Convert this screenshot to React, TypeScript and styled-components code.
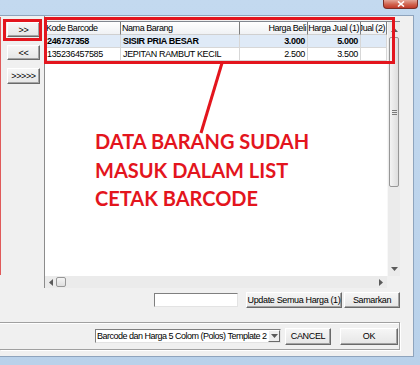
import React from "react";
import styled, { createGlobalStyle } from "styled-components";

const uiFont = `"Liberation Sans", Arial, sans-serif`;

const GlobalStyle = createGlobalStyle`
  html, body {
    margin: 0;
    padding: 0;
  }
  body {
    width: 420px;
    height: 365px;
    overflow: hidden;
    background: #bcd4ec;
    font-family: ${uiFont};
    font-size: 9px;
    letter-spacing: -0.35px;
    color: #000;
  }
`;

const Window = styled.div`
  position: relative;
  width: 420px;
  height: 365px;
  display: flex;
  flex-direction: column;
  background: linear-gradient(#c3d9ef, #b9d1ea);
`;

const TitleBar = styled.div`
  height: 15px;
  flex-shrink: 0;
  display: flex;
  justify-content: flex-end;
  align-items: flex-start;
  padding-right: 2px;
`;

const CloseButton = styled.div`
  width: 35px;
  height: 9px;
  box-sizing: border-box;
  border: 1px solid #7a2e26;
  border-top: none;
  border-radius: 0 0 4px 4px;
  background: linear-gradient(#e4a597, #d0624d 55%, #c13a2a);
  display: flex;
  align-items: center;
  justify-content: center;
`;

const Frame = styled.div`
  flex: 1;
  min-height: 0;
  display: flex;
  padding-right: 6px;
`;

const Body = styled.div`
  flex: 1;
  background: #f0f0f0;
  border-top: 1px solid #8ea4bd;
  border-right: 1px solid #8ea4bd;
  border-bottom: 1px solid #8ea4bd;
  display: flex;
  flex-direction: column;
`;

const BottomFrame = styled.div`
  height: 8px;
  flex-shrink: 0;
`;

const Upper = styled.div`
  height: 272px;
  display: flex;
`;

const LeftPanel = styled.div`
  width: 45px;
  border-right: 1px solid #8c8c8c;
  display: flex;
  flex-direction: column;
  gap: 8px;
  padding: 6px 0 0 7px;
  box-sizing: border-box;
`;

const WinButton = styled.button<{ $w: number; $h?: number }>`
  width: ${(p) => p.$w}px;
  height: ${(p) => p.$h ?? 16}px;
  padding: 0;
  margin: 0;
  box-sizing: border-box;
  font-family: ${uiFont};
  font-size: 9px;
  letter-spacing: -0.35px;
  white-space: nowrap;
  color: #000;
  background: linear-gradient(#f6f6f6, #e6e6e6);
  border: 1px solid;
  border-color: #ffffff #6a6a6a #6a6a6a #ffffff;
  box-shadow: inset -1px -1px 0 #a3a3a3;
  display: flex;
  align-items: center;
  justify-content: center;
  flex-shrink: 0;
`;

const Grid = styled.div`
  margin-top: 5px;
  width: 355px;
  height: 267px;
  box-sizing: border-box;
  border-top: 1px solid #828790;
  display: grid;
  grid-template-columns: 1fr 13px;
  grid-template-rows: 1fr 12px;
  background: #fff;
`;

const DataArea = styled.div`
  overflow: hidden;
  background: #fff;
`;

const Row = styled.div<{ $selected?: boolean }>`
  display: flex;
  height: 13px;
  background: ${(p) => (p.$selected ? "#dfeaf7" : "#fff")};
`;

const HeaderRow = styled(Row)`
  background: linear-gradient(#ffffff, #eef0f3);
  letter-spacing: -0.45px;
`;

const Cell = styled.div<{ $w: number; $right?: boolean; $bold?: boolean; $header?: boolean }>`
  width: ${(p) => p.$w}px;
  flex-shrink: 0;
  box-sizing: border-box;
  height: 13px;
  line-height: 12px;
  padding: 0 ${(p) => (p.$header ? 1 : 2)}px;
  overflow: hidden;
  white-space: nowrap;
  display: flex;
  justify-content: ${(p) => (p.$right ? "flex-end" : "flex-start")};
  font-weight: ${(p) => (p.$bold ? 700 : 400)};
  border-right: 1px solid ${(p) => (p.$header ? "#7d7d7d" : "#d7d7d7")};
  border-bottom: 1px solid ${(p) => (p.$header ? "#d0d0d0" : "#d7d7d7")};
  span {
    flex-shrink: 0;
  }
`;

const VScroll = styled.div`
  background: #ebebeb;
  border-left: 1px solid #f8f8f8;
  display: flex;
  flex-direction: column;
  align-items: center;
`;

const ArrowSlot = styled.div<{ $h: number }>`
  height: ${(p) => p.$h}px;
  width: 100%;
  display: flex;
  align-items: center;
  justify-content: center;
  flex-shrink: 0;
`;

const VThumb = styled.div`
  width: 10px;
  height: 150px;
  box-sizing: border-box;
  border: 1px solid #979797;
  border-radius: 2px;
  background: linear-gradient(90deg, #f4f4f4, #dedede);
  display: flex;
  flex-direction: column;
  align-items: center;
  justify-content: center;
  gap: 1px;
  i {
    display: block;
    width: 5px;
    height: 1px;
    background: #7a7a7a;
  }
`;

const Spacer = styled.div`
  flex: 1;
`;

const HScroll = styled.div`
  background: #ebebeb;
  display: flex;
  align-items: center;
  padding: 0 4px;
`;

const HThumb = styled.div`
  width: 10px;
  height: 10px;
  box-sizing: border-box;
  border: 1px solid #979797;
  border-radius: 2px;
  background: linear-gradient(#f4f4f4, #dedede);
  margin-left: 3px;
`;

const Corner = styled.div`
  background: #f0f0f0;
`;

const Controls = styled.div`
  margin-top: 4px;
  height: 16px;
  display: flex;
  justify-content: flex-end;
  align-items: center;
  padding-right: 13px;
  gap: 2px;
`;

const TextInput = styled.div`
  width: 84px;
  height: 14px;
  box-sizing: border-box;
  background: #fff;
  border: 1px solid;
  border-color: #7f7f7f #e3e3e3 #e3e3e3 #7f7f7f;
  margin-right: 6px;
`;

const GroupBox = styled.div`
  margin-top: 14px;
  width: 400px;
  height: 28px;
  box-sizing: border-box;
  border-top: 1px solid #a0a0a0;
  border-right: 1px solid #a0a0a0;
  border-bottom: 1px solid #a0a0a0;
  box-shadow: inset 0 1px 0 #fff, 1px 1px 0 #fff;
  display: flex;
  justify-content: flex-end;
  align-items: center;
  padding-right: 1px;
`;

const Combo = styled.div`
  width: 186px;
  height: 14px;
  box-sizing: border-box;
  background: #fff;
  border: 1px solid;
  border-color: #7f7f7f #e3e3e3 #e3e3e3 #7f7f7f;
  display: flex;
  align-items: center;
  margin-right: 4px;
  span {
    flex: 1;
    padding-left: 1px;
    white-space: nowrap;
    overflow: hidden;
    line-height: 12px;
    letter-spacing: -0.5px;
  }
`;

const ComboArrow = styled.div`
  width: 12px;
  height: 12px;
  box-sizing: border-box;
  background: #eeeeee;
  border: 1px solid;
  border-color: #fff #6a6a6a #6a6a6a #fff;
  display: flex;
  align-items: center;
  justify-content: center;
  flex-shrink: 0;
`;

const RedBox = styled.div<{ $x: number; $y: number; $w: number; $h: number }>`
  position: absolute;
  left: ${(p) => p.$x}px;
  top: ${(p) => p.$y}px;
  width: ${(p) => p.$w}px;
  height: ${(p) => p.$h}px;
  box-sizing: border-box;
  border: 3px solid #e3151d;
  pointer-events: none;
`;

const RedEdge = styled.div`
  position: absolute;
  left: 0;
  top: 17px;
  width: 1px;
  height: 258px;
  background: #e05a5a;
`;

const ArrowLayer = styled.svg`
  position: absolute;
  left: 0;
  top: 0;
  pointer-events: none;
`;

const Note = styled.div`
  position: absolute;
  left: 95px;
  top: 127px;
  font-family: Lato, "Open Sans", sans-serif;
  font-weight: 700;
  font-size: 20px;
  letter-spacing: 0;
  line-height: 28.5px;
  color: #e3151d;
  white-space: nowrap;
`;

const colWidths = [76, 119, 68, 53, 26];

const headers = [
  { label: "Kode Barcode" },
  { label: "Nama Barang" },
  { label: "Harga Beli", right: true },
  { label: "Harga Jual (1)", right: true },
  { label: "Harga Jual (2)", right: true },
];

const rows = [
  { code: "246737358", name: "SISIR PRIA BESAR", beli: "3.000", jual: "5.000", bold: true },
  { code: "135236457585", name: "JEPITAN RAMBUT KECIL", beli: "2.500", jual: "3.500", bold: false },
];

function Tri({ dir }: { dir: "up" | "down" | "left" | "right" }) {
  const pts = {
    up: "0,4 3.5,0 7,4",
    down: "0,0 7,0 3.5,4",
    left: "4,0 4,7 0,3.5",
    right: "0,0 0,7 4,3.5",
  }[dir];
  const vertical = dir === "up" || dir === "down";
  return (
    <svg width={vertical ? 7 : 4} height={vertical ? 4 : 7}>
      <polygon points={pts} fill="#5a5a5a" />
    </svg>
  );
}

export default function App() {
  return (
    <>
      <GlobalStyle />
      <Window>
        <TitleBar>
          <CloseButton>
            <svg width="8" height="6" viewBox="0 0 8 6">
              <path d="M1 0.5 L7 5.5 M7 0.5 L1 5.5" stroke="#fff" strokeWidth="1.6" />
            </svg>
          </CloseButton>
        </TitleBar>
        <Frame>
          <Body>
            <Upper>
              <LeftPanel>
                <WinButton $w={33} $h={15}>&gt;&gt;</WinButton>
                <WinButton $w={33} $h={15}>&lt;&lt;</WinButton>
                <WinButton $w={33} $h={16}>&gt;&gt;&gt;&gt;&gt;</WinButton>
              </LeftPanel>
              <Grid>
                <DataArea>
                  <HeaderRow>
                    {headers.map((h, i) => (
                      <Cell key={h.label} $w={colWidths[i]} $right={h.right} $header>
                        <span>{h.label}</span>
                      </Cell>
                    ))}
                  </HeaderRow>
                  {rows.map((r, idx) => (
                    <Row key={r.code} $selected={idx === 0}>
                      <Cell $w={colWidths[0]} $bold={r.bold}><span>{r.code}</span></Cell>
                      <Cell $w={colWidths[1]} $bold={r.bold}><span>{r.name}</span></Cell>
                      <Cell $w={colWidths[2]} $bold={r.bold} $right><span>{r.beli}</span></Cell>
                      <Cell $w={colWidths[3]} $bold={r.bold} $right><span>{r.jual}</span></Cell>
                      <Cell $w={colWidths[4]} />
                    </Row>
                  ))}
                </DataArea>
                <VScroll>
                  <ArrowSlot $h={15}><Tri dir="up" /></ArrowSlot>
                  <VThumb><i /><i /><i /></VThumb>
                  <Spacer />
                  <ArrowSlot $h={14}><Tri dir="down" /></ArrowSlot>
                </VScroll>
                <HScroll>
                  <Tri dir="left" />
                  <HThumb />
                  <Spacer />
                  <Tri dir="right" />
                </HScroll>
                <Corner />
              </Grid>
            </Upper>
            <Controls>
              <TextInput />
              <WinButton $w={96}>Update Semua Harga (1)</WinButton>
              <WinButton $w={56}>Samarkan</WinButton>
            </Controls>
            <GroupBox>
              <Combo>
                <span>Barcode dan Harga 5 Colom (Polos) Template 2</span>
                <ComboArrow><Tri dir="down" /></ComboArrow>
              </Combo>
              <WinButton $w={46} $h={17} style={{ marginRight: 9 }}>CANCEL</WinButton>
              <WinButton $w={58} $h={17}>OK</WinButton>
            </GroupBox>
          </Body>
        </Frame>
        <BottomFrame />

        <RedEdge />
        <RedBox $x={3} $y={19} $w={39} $h={22} />
        <RedBox $x={44} $y={17} $w={351} $h={47} />
        <ArrowLayer width={420} height={365}>
          <line x1={222} y1={63} x2={201} y2={133} stroke="#e3151d" strokeWidth={3} />
        </ArrowLayer>
        <Note>
          DATA BARANG SUDAH
          <br />
          MASUK DALAM LIST
          <br />
          CETAK BARCODE
        </Note>
      </Window>
    </>
  );
}
